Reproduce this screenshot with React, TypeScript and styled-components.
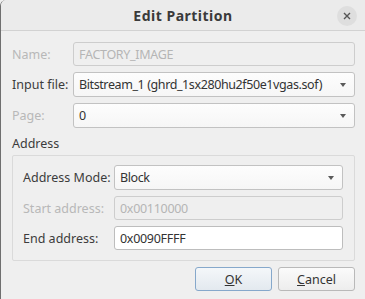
import React from 'react';
import styled, { createGlobalStyle } from 'styled-components';

const GlobalStyle = createGlobalStyle`
  html, body {
    margin: 0;
    padding: 0;
    background: #efefef;
  }
  body {
    font-family: "Noto Sans", "DejaVu Sans", sans-serif;
    font-size: 12.5px;
    color: #3c3c3c;
  }
`;

const Window = styled.div`
  width: 365px;
  height: 299px;
  box-sizing: border-box;
  border-left: 1px solid #6f6f6f;
  border-top-left-radius: 6px;
  background: #efefef;
  display: flex;
  flex-direction: column;
  overflow: hidden;
`;

const TitleBar = styled.div`
  height: 31px;
  flex: none;
  box-sizing: border-box;
  border-bottom: 1px solid #d2d2d2;
  background: #ebebeb;
  display: flex;
  align-items: center;
  justify-content: center;
  position: relative;
`;

const Title = styled.div`
  font-weight: bold;
  font-size: 14px;
  letter-spacing: 0.5px;
  color: #3a3a3a;
`;

const CloseButton = styled.div`
  position: absolute;
  right: 8px;
  top: 6px;
  width: 20px;
  height: 20px;
  border-radius: 50%;
  background: #dedede;
  display: flex;
  align-items: center;
  justify-content: center;
`;

const Body = styled.div`
  padding: 11px 10px 0 11px;
  display: flex;
  flex-direction: column;
`;

const Form = styled.div<{ $labelWidth: number }>`
  display: grid;
  grid-template-columns: ${(p) => p.$labelWidth}px 1fr;
  row-gap: 6px;
  align-items: center;
`;

const Label = styled.div<{ $disabled?: boolean }>`
  color: ${(p) => (p.$disabled ? '#b8b8b8' : '#3c3c3c')};
  white-space: nowrap;
`;

const Field = styled.div<{ $disabled?: boolean }>`
  height: 24px;
  box-sizing: border-box;
  border: 1px solid ${(p) => (p.$disabled ? '#cdcdcd' : '#bdbdbd')};
  border-radius: 3px;
  background: ${(p) => (p.$disabled ? '#efefef' : '#ffffff')};
  color: ${(p) => (p.$disabled ? '#b5b5b5' : '#333333')};
  padding: 0 5px;
  letter-spacing: -0.3px;
  display: flex;
  align-items: center;
  white-space: nowrap;
`;

const Combo = styled.div`
  height: 25px;
  box-sizing: border-box;
  border: 1px solid #c2c2c2;
  border-radius: 3px;
  background: linear-gradient(#fdfdfd, #f6f6f6);
  color: #333333;
  padding: 0 8px 0 5px;
  letter-spacing: -0.4px;
  display: flex;
  align-items: center;
  justify-content: space-between;
  white-space: nowrap;
`;

const Arrow = styled.div`
  width: 0;
  height: 0;
  border-left: 3.5px solid transparent;
  border-right: 3.5px solid transparent;
  border-top: 4px solid #5a5a5a;
`;

const SectionTitle = styled.div`
  margin-top: 8px;
  height: 16px;
  line-height: 16px;
`;

const GroupBox = styled.div`
  margin-top: 3px;
  border: 1px solid #dadada;
  border-radius: 2px;
  padding: 9px 11px 10px 10px;
`;

const ButtonRow = styled.div`
  margin-top: 6px;
  display: flex;
  justify-content: flex-end;
  gap: 6px;
`;

const Button = styled.div<{ $focused?: boolean }>`
  width: 77px;
  height: 24px;
  box-sizing: border-box;
  border: 1px solid ${(p) => (p.$focused ? '#86a8cb' : '#b9b9b9')};
  border-radius: 3px;
  background: ${(p) =>
    p.$focused ? 'linear-gradient(#f4f7fa, #e3e9ef)' : 'linear-gradient(#fbfbfb, #ededed)'};
  display: flex;
  align-items: center;
  justify-content: center;
  color: #333333;
`;

const Mnemonic = styled.span`
  text-decoration: underline;
`;

function ComboBox({ value }: { value: string }) {
  return (
    <Combo>
      <span>{value}</span>
      <Arrow />
    </Combo>
  );
}

export default function App() {
  return (
    <>
      <GlobalStyle />
      <Window>
        <TitleBar>
          <Title>Edit Partition</Title>
          <CloseButton>
            <svg width="8" height="8" viewBox="0 0 8 8">
              <path d="M1 1L7 7M7 1L1 7" stroke="#555" strokeWidth="1.4" />
            </svg>
          </CloseButton>
        </TitleBar>
        <Body>
          <Form $labelWidth={61}>
            <Label $disabled>Name:</Label>
            <Field $disabled>FACTORY_IMAGE</Field>
            <Label>Input file:</Label>
            <ComboBox value="Bitstream_1 (ghrd_1sx280hu2f50e1vgas.sof)" />
            <Label $disabled>Page:</Label>
            <ComboBox value="0" />
          </Form>
          <SectionTitle>Address</SectionTitle>
          <GroupBox>
            <Form $labelWidth={91}>
              <Label>Address Mode:</Label>
              <ComboBox value="Block" />
              <Label $disabled>Start address:</Label>
              <Field $disabled>0x00110000</Field>
              <Label>End address:</Label>
              <Field>0x0090FFFF</Field>
            </Form>
          </GroupBox>
          <ButtonRow>
            <Button $focused>
              <span>
                <Mnemonic>O</Mnemonic>K
              </span>
            </Button>
            <Button>
              <span>
                <Mnemonic>C</Mnemonic>ancel
              </span>
            </Button>
          </ButtonRow>
        </Body>
      </Window>
    </>
  );
}
